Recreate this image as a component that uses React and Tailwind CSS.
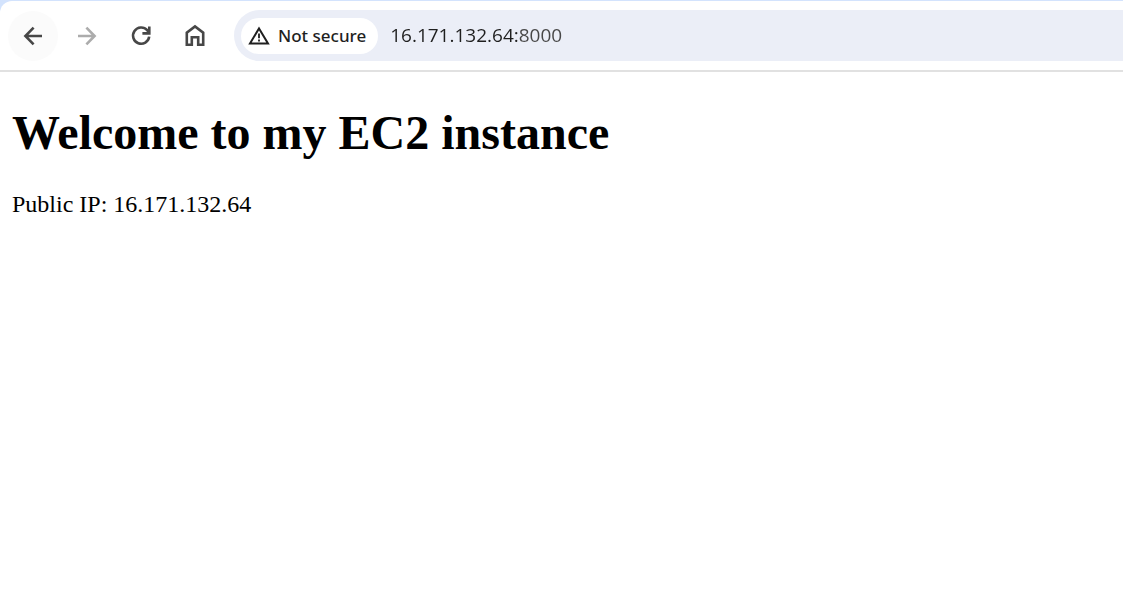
function NavButton({ label, className = "text-[#474747]", children }) {
  return (
    <button
      type="button"
      aria-label={label}
      className={`flex size-[50px] shrink-0 items-center justify-center rounded-full ${className}`}
    >
      {children}
    </button>
  );
}

function Icon({ children }) {
  return (
    <svg
      viewBox="0 0 26 26"
      className="size-[26px]"
      fill="none"
      stroke="currentColor"
      strokeWidth="2.6"
      aria-hidden="true"
    >
      {children}
    </svg>
  );
}

function Toolbar() {
  return (
    <header className="bg-[#d3e3fd] pt-px">
      <div className="flex items-center rounded-tl-xl border-b-2 border-[#e1e1e1] bg-white py-[9px] pl-2">
        <nav aria-label="Browser" className="flex gap-1">
          <NavButton label="Back" className="bg-[#fbfbfb] text-[#474747]">
            <Icon>
              <path d="M22 13H5.6M13.6 4.7L5.4 13L13.6 21.3" />
            </Icon>
          </NavButton>
          <NavButton label="Forward" className="text-[#acacac]">
            <Icon>
              <path d="M4 13H20.4M12.4 4.7L20.6 13L12.4 21.3" />
            </Icon>
          </NavButton>
          <NavButton label="Reload">
            <Icon>
              <path d="M21.2 13.6A8.1 8.1 0 1 1 19.2 7.2L20.6 9" />
              <path d="M21.3 3.4V10.4H14.4" />
            </Icon>
          </NavButton>
          <NavButton label="Home">
            <Icon>
              <path d="M4.8 21.7V9.6L13 3.4L21.2 9.6V21.7H16.2V14.2H9.8V21.7Z" />
            </Icon>
          </NavButton>
        </nav>

        <div className="ml-[14px] flex h-[51px] min-w-0 flex-1 items-center rounded-l-full bg-[#ebeef7] pl-[7px]">
          <button
            type="button"
            className="flex h-9 shrink-0 items-center gap-2 rounded-full bg-white pr-3 pl-[7px] font-['Noto_Sans','Open_Sans',sans-serif] text-[17px] font-medium text-[#1f1f1f]"
          >
            <svg viewBox="0 0 22 20" className="h-5 w-[22px]" fill="none" stroke="currentColor" aria-hidden="true">
              <path d="M2 17.4L11 2.4L20 17.4Z" strokeWidth="2" />
              <path d="M11 7.6V12.2M11 13.4V15.4" strokeWidth="1.8" />
            </svg>
            <span>Not secure</span>
          </button>
          <input
            type="text"
            aria-label="Address"
            defaultValue="16.171.132.64:8000"
            spellCheck={false}
            className="ml-3 min-w-0 flex-1 bg-[linear-gradient(to_right,#1f1f1f_128px,#474747_128px)] bg-clip-text font-['Open_Sans','Noto_Sans',sans-serif] text-[19px] text-transparent caret-[#1f1f1f] outline-none"
          />
        </div>
      </div>
    </header>
  );
}

export default function App() {
  return (
    <div className="min-h-screen bg-white">
      <Toolbar />
      <main className="px-3 pt-8 font-['Liberation_Serif','Times_New_Roman',serif] text-black">
        <h1 className="text-5xl leading-[58px] font-bold">Welcome to my EC2 instance</h1>
        <p className="mt-7 text-2xl leading-7">Public IP: 16.171.132.64</p>
      </main>
    </div>
  );
}
